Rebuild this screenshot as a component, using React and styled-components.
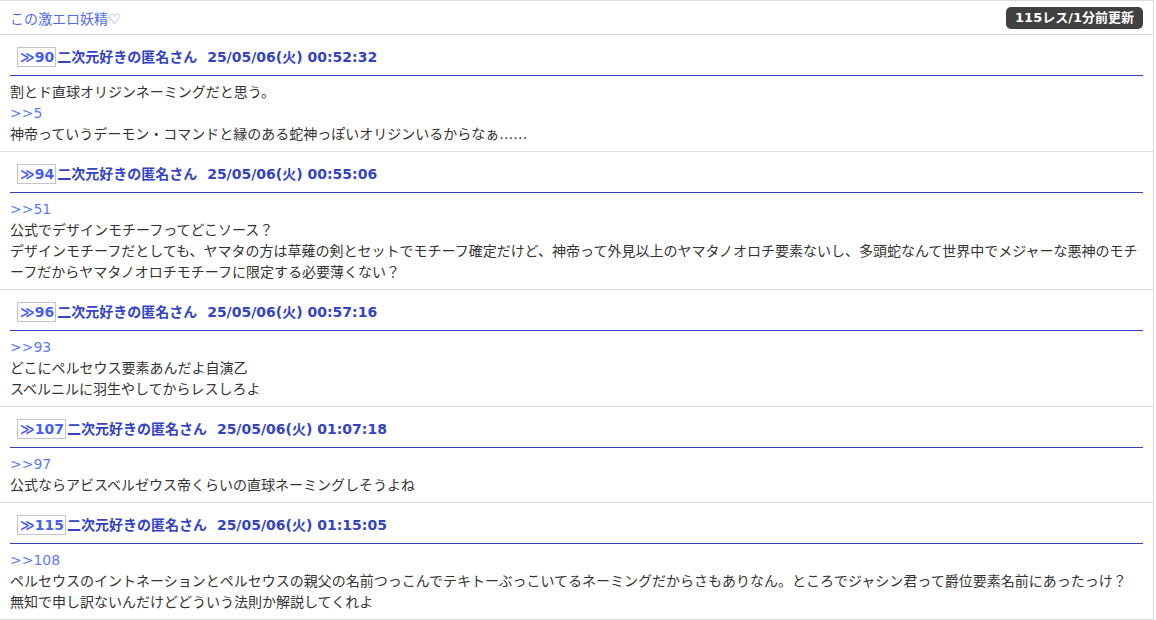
import React from "react";
import styled, { createGlobalStyle } from "styled-components";

const GlobalStyle = createGlobalStyle`
  html, body {
    margin: 0;
    padding: 0;
    background: #fff;
  }
  body {
    font-family: "DejaVu Sans", "Noto Sans CJK JP", sans-serif;
    font-size: 14px;
    color: #333;
  }
`;

const posts = [
  {
    no: 90,
    time: "25/05/06(火) 00:52:32",
    lines: [
      { text: "割とド直球オリジンネーミングだと思う。" },
      { anchor: ">>5" },
      { text: "神帝っていうデーモン・コマンドと縁のある蛇神っぽいオリジンいるからなぁ……" },
    ],
  },
  {
    no: 94,
    time: "25/05/06(火) 00:55:06",
    lines: [
      { anchor: ">>51" },
      { text: "公式でデザインモチーフってどこソース？" },
      {
        text:
          "デザインモチーフだとしても、ヤマタの方は草薙の剣とセットでモチーフ確定だけど、神帝って外見以上のヤマタノオロチ要素ないし、多頭蛇なんて世界中でメジャーな悪神のモチーフだからヤマタノオロチモチーフに限定する必要薄くない？",
      },
    ],
  },
  {
    no: 96,
    time: "25/05/06(火) 00:57:16",
    lines: [
      { anchor: ">>93" },
      { text: "どこにペルセウス要素あんだよ自演乙" },
      { text: "スベルニルに羽生やしてからレスしろよ" },
    ],
  },
  {
    no: 107,
    time: "25/05/06(火) 01:07:18",
    lines: [
      { anchor: ">>97" },
      { text: "公式ならアビスベルゼウス帝くらいの直球ネーミングしそうよね" },
    ],
  },
  {
    no: 115,
    time: "25/05/06(火) 01:15:05",
    lines: [
      { anchor: ">>108" },
      {
        text:
          "ペルセウスのイントネーションとペルセウスの親父の名前つっこんでテキトーぶっこいてるネーミングだからさもありなん。ところでジャシン君って爵位要素名前にあったっけ？",
      },
      { text: "無知で申し訳ないんだけどどういう法則か解説してくれよ" },
    ],
  },
];

export default function App() {
  return (
    <>
      <GlobalStyle />
      <Board>
        <TitleBar>
          <ThreadTitle>この激エロ妖精♡</ThreadTitle>
          <Badge>115レス/1分前更新</Badge>
        </TitleBar>
        {posts.map((p) => (
          <Post key={p.no}>
            <PostHead>
              <ResNo>≫{p.no}</ResNo>
              <Name>二次元好きの匿名さん</Name>
              <Stamp>{p.time}</Stamp>
            </PostHead>
            <PostBody>
              {p.lines.map((l, i) =>
                l.anchor ? (
                  <Anchor key={i}>{l.anchor}</Anchor>
                ) : (
                  <Line key={i}>{l.text}</Line>
                )
              )}
            </PostBody>
          </Post>
        ))}
      </Board>
    </>
  );
}

const Board = styled.div`
  width: 1154px;
  border-top: 1px solid #ddd;
  border-right: 1px solid #ddd;
  box-sizing: border-box;
`;

const TitleBar = styled.div`
  display: flex;
  align-items: center;
  justify-content: space-between;
  height: 33px;
  padding: 0 10px;
  border-bottom: 1px solid #ddd;
`;

const ThreadTitle = styled.span`
  color: #4f6ef0;
  font-size: 14px;
`;

const Badge = styled.span`
  background: #404040;
  color: #fff;
  font-weight: bold;
  font-size: 13px;
  line-height: 22px;
  padding: 0 9px;
  border-radius: 5px;
`;

const Post = styled.div`
  padding: 0 10px;
  border-bottom: 1px solid #ddd;
`;

const PostHead = styled.div`
  display: flex;
  align-items: center;
  padding: 12px 0 8px 7px;
  border-bottom: 1px solid #3344bb;
  font-weight: bold;
  font-size: 14px;
  line-height: 20px;
`;

const ResNo = styled.span`
  border: 1px solid #c4c4c4;
  padding: 0 1px 0 2px;
  color: #4a5ef0;
  font-size: 14px;
  line-height: 18px;
  margin-right: 1px;
`;

const Name = styled.span`
  color: #3443c4;
  margin-right: 10px;
`;

const Stamp = styled.span`
  color: #3443c4;
`;

const PostBody = styled.div`
  padding: 6px 0;
  line-height: 21px;
`;

const Line = styled.div`
  color: #333;
`;

const Anchor = styled.div`
  color: #5b7cf6;
`;
